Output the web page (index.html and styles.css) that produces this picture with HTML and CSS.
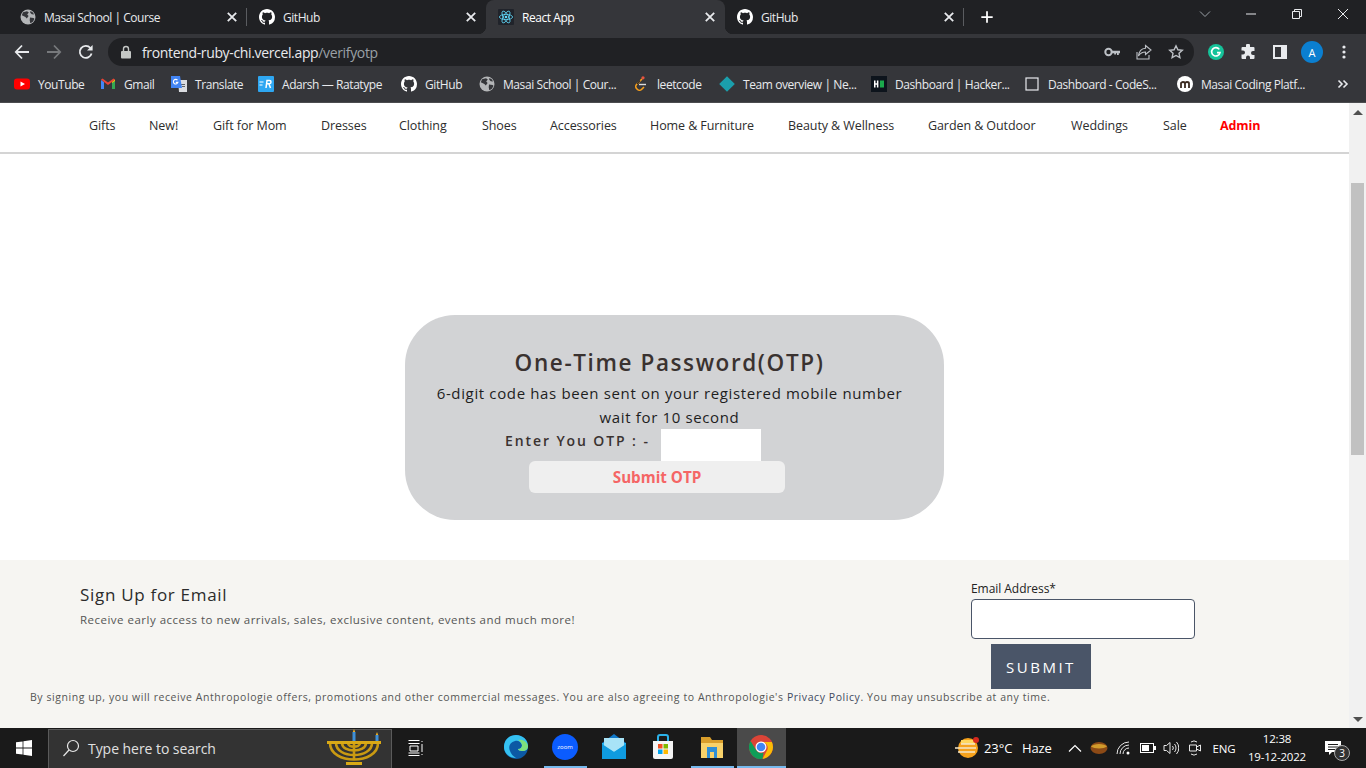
FILE: index.html
```html
<!DOCTYPE html>
<html lang="en">
<head>
<meta charset="utf-8">
<title>React App</title>
<link rel="stylesheet" href="styles.css">
</head>
<body>
<svg class="sprite" aria-hidden="true">
  <symbol id="gh" viewBox="0 0 16 16"><path fill="#fff" d="M8 0C3.58 0 0 3.58 0 8c0 3.54 2.29 6.53 5.47 7.59.4.07.55-.17.55-.38 0-.19-.01-.82-.01-1.49-2.01.37-2.53-.49-2.69-.94-.09-.23-.48-.94-.82-1.13-.28-.15-.68-.52-.01-.53.63-.01 1.08.58 1.23.82.72 1.21 1.87.87 2.33.66.07-.52.28-.87.51-1.07-1.78-.2-3.64-.89-3.64-3.95 0-.87.31-1.59.82-2.15-.08-.2-.36-1.02.08-2.12 0 0 .67-.21 2.2.82.64-.18 1.32-.27 2-.27.68 0 1.36.09 2 .27 1.53-1.04 2.2-.82 2.2-.82.44 1.1.16 1.92.08 2.12.51.56.82 1.27.82 2.15 0 3.07-1.87 3.75-3.65 3.95.29.25.54.73.54 1.48 0 1.07-.01 1.93-.01 2.2 0 .21.15.46.55.38A8.013 8.013 0 0016 8c0-4.42-3.58-8-8-8z"/></symbol>
  <symbol id="globe" viewBox="0 0 16 16"><circle cx="8" cy="8" r="7.5" fill="#b4b6b8"/><path fill="#35363a" d="M3 3.2 7 2.2 8.8 3.6 7.2 5.4 8.6 7 6.8 9.4 5.4 8 3.4 7 1.8 6.2ZM10 8.6l3.6.4.9 1-1.8 3-2.4 1.2-.6-3ZM10.4 2l2.6 1.6 1 2-2.2-.4-1.6-1.4Z"/></symbol>
  <symbol id="close" viewBox="0 0 16 16"><path stroke="#e8eaed" stroke-width="1.8" fill="none" d="M3.8 3.8l8.4 8.4M12.2 3.8l-8.4 8.4"/></symbol>
</svg>

<header class="tabbar">
  <div class="tab sep"><svg class="fav"><use href="#globe"/></svg><span class="tab-title">Masai School | Course</span><svg class="tab-x"><use href="#close"/></svg></div>
  <div class="tab"><svg class="fav"><use href="#gh"/></svg><span class="tab-title">GitHub</span><svg class="tab-x"><use href="#close"/></svg></div>
  <div class="tab tab-active">
    <svg class="fav" viewBox="0 0 16 16"><rect width="16" height="16" rx="1" fill="#20232a"/><g fill="none" stroke="#61dafb" stroke-width=".8"><ellipse cx="8" cy="8" rx="6.6" ry="2.6"/><ellipse cx="8" cy="8" rx="6.6" ry="2.6" transform="rotate(60 8 8)"/><ellipse cx="8" cy="8" rx="6.6" ry="2.6" transform="rotate(120 8 8)"/></g><circle cx="8" cy="8" r="1.3" fill="#61dafb"/></svg>
    <span class="tab-title">React App</span><svg class="tab-x"><use href="#close"/></svg></div>
  <div class="tab sep"><svg class="fav"><use href="#gh"/></svg><span class="tab-title">GitHub</span><svg class="tab-x"><use href="#close"/></svg></div>
  <svg class="plus" viewBox="0 0 16 16"><path stroke="#fff" stroke-width="2" d="M8 1.5v13M1.5 8h13"/></svg>
  <div class="winctl">
    <span class="ctl"><svg width="12" height="12" viewBox="0 0 12 12"><path fill="none" stroke="#9aa0a6" d="M1 3.5l5 5 5-5"/></svg></span>
    <span class="ctl"><svg width="12" height="12" viewBox="0 0 12 12"><path stroke="#e8eaed" d="M1 6h10"/></svg></span>
    <span class="ctl"><svg width="12" height="12" viewBox="0 0 12 12"><path fill="none" stroke="#e8eaed" d="M1.5 3.5h7v7h-7zM3.5 3.5v-2h7v7h-2"/></svg></span>
    <span class="ctl"><svg width="12" height="12" viewBox="0 0 12 12"><path stroke="#e8eaed" d="M1 1l10 10M11 1L1 11"/></svg></span>
  </div>
</header>

<div class="toolbar">
  <span class="tbtn"><svg width="16" height="16" viewBox="0 0 16 16"><path fill="none" stroke="#e8eaed" stroke-width="1.8" d="M15 8H2M8 1.5 1.8 8 8 14.5"/></svg></span>
  <span class="tbtn"><svg width="16" height="16" viewBox="0 0 16 16"><path fill="none" stroke="#77797c" stroke-width="1.8" d="M1 8h13M8 1.5 14.2 8 8 14.5"/></svg></span>
  <span class="tbtn"><svg width="16" height="16" viewBox="0 0 16 16"><path fill="none" stroke="#e8eaed" stroke-width="1.8" d="M13.6 9.5A6 6 0 1 1 12.4 4"/><path fill="#e8eaed" d="M14.6 1v5.6H9z"/></svg></span>
  <div class="omnibox">
    <svg class="lock" width="12" height="14" viewBox="0 0 12 14"><path fill="#c4c7c5" d="M2 6h8a1 1 0 0 1 1 1v5.500a1 1 0 0 1-1 1H2a1 1 0 0 1-1-1V7a1 1 0 0 1 1-1z"/><path fill="none" stroke="#c4c7c5" stroke-width="1.400" d="M3.500 6.500V4a2.500 2.500 0 0 1 5 0v2.500"/></svg>
    <span class="url">frontend-ruby-chi.vercel.app<span class="url-path">/verifyotp</span></span>
    <span class="tbtn"><svg width="16" height="16" viewBox="0 0 16 16"><circle cx="4.500" cy="8" r="3.200" fill="none" stroke="#bdc1c6" stroke-width="2"/><path fill="#bdc1c6" d="M7.500 6.800H16v2.400h-1.200v1.800h-1.800V9.200h-1v1.300h-1.800V9.200H7.500z"/></svg></span>
    <span class="tbtn"><svg width="18" height="18" viewBox="0 0 18 18"><path fill="none" stroke="#bdc1c6" stroke-width="1.100" d="M2 9v7h12v-4M10.500 2.500 16 7l-5.500 4.500V9C7 9 5 10.500 3.500 13c.5-4.500 3-7.500 7-7.800z"/></svg></span>
    <span class="tbtn"><svg width="16" height="16" viewBox="0 0 16 16"><path fill="none" stroke="#bdc1c6" stroke-width="1.400" d="M8 1.800l1.900 4 4.400.5-3.300 3 .9 4.400L8 11.500l-3.900 2.200.9-4.400-3.300-3 4.400-.5z"/></svg></span>
  </div>
  <span class="tbtn tbtn-first"><svg width="16" height="16" viewBox="0 0 16 16"><circle cx="8" cy="8" r="8" fill="#15c39a"/><path fill="none" stroke="#fff" stroke-width="1.600" d="M11.300 5.400A4.200 4.200 0 1 0 12 8.600H9"/></svg></span>
  <span class="tbtn"><svg width="16" height="16" viewBox="0 0 16 16"><path fill="#e8eaed" d="M6 1.500a2 2 0 0 1 4 0V3h3.500a1 1 0 0 1 1 1v3H13a2 2 0 0 0 0 4h1.500v3a1 1 0 0 1-1 1H10v-1.500a2 2 0 0 0-4 0V15H2.500a1 1 0 0 1-1-1v-3.500H3a2 2 0 0 0 0-4H1.500V4a1 1 0 0 1 1-1H6z"/></svg></span>
  <span class="tbtn"><svg width="14" height="14" viewBox="0 0 14 14"><path fill="#e8eaed" fill-rule="evenodd" d="M0 0h14v14H0zM2 2v10h6V2z"/></svg></span>
  <span class="tbtn"><span class="avatar">A</span></span>
  <span class="tbtn"><svg width="4" height="14" viewBox="0 0 4 14"><g fill="#e8eaed"><circle cx="2" cy="2" r="1.600"/><circle cx="2" cy="7" r="1.600"/><circle cx="2" cy="12" r="1.600"/></g></svg></span>
</div>

<nav class="bookmarks">
  <a class="bm bm-yt"><svg class="fav" viewBox="0 0 16 16"><rect y="2.500" width="16" height="11" rx="3" fill="#f00"/><path fill="#fff" d="M6.500 5.500 11 8l-4.500 2.500z"/></svg>YouTube</a>
  <a class="bm bm-gm"><svg class="fav" viewBox="0 0 16 16"><path fill="#4285f4" d="M1 4v9h3V6z"/><path fill="#34a853" d="M12 6v7h3V4z"/><path fill="#ea4335" d="M1 3.500 4 6l4 3 4-3 3-2.500-1.500-1L8 6.500 2.500 2.500z"/><path fill="#fbbc04" d="M12 6l3-2.500V5l-3 2z"/></svg>Gmail</a>
  <a class="bm bm-tr"><svg class="fav" viewBox="0 0 16 16"><path fill="#dadce0" d="M7 4h9v12H8z"/><path fill="#5f6368" d="M10 8h4v1h-4zM11 10h3v1h-3z"/><path fill="#4285f4" d="M0 0h9l2 12H0z"/><path fill="none" stroke="#fff" stroke-width="1.100" d="M6.500 4.200a2.300 2.300 0 1 0 .4 2.200H4.800"/></svg>Translate</a>
  <a class="bm bm-ra"><svg class="fav" viewBox="0 0 16 16"><rect width="16" height="16" rx="1" fill="#2ea7f2"/><path fill="#fff" d="M1.500 5.500h4v1h-4zM1.500 8.500h3v1h-3z"/><path fill="none" stroke="#fff" stroke-width="1.500" d="M8 12 9 4.500h2.500c2 0 2 3.200 0 3.200H9M11 8l1.500 4"/></svg>Adarsh — Ratatype</a>
  <a class="bm bm-gh"><svg class="fav"><use href="#gh"/></svg>GitHub</a>
  <a class="bm bm-ma"><svg class="fav"><use href="#globe"/></svg>Masai School | Cour...</a>
  <a class="bm bm-lc"><svg class="fav" viewBox="0 0 16 16"><circle cx="10" cy="1.800" r="1.600" fill="#e8543f"/><path fill="none" stroke="#f89f1b" stroke-width="1.600" d="M9 3 3.500 8.500c-1 1-1 3 0 4l1 1c1 1 3 1 4 0L11 11"/><path stroke="#dcdcdc" stroke-width="1.400" d="M6 8.500h7"/><path fill="none" stroke="#2c2c2c" stroke-width="1.200" d="M7 4.500 4 8"/></svg>leetcode</a>
  <a class="bm bm-te"><svg class="fav" viewBox="0 0 16 16"><path fill="#1b9fac" d="M8 .2 15.800 8 8 15.800.2 8z"/></svg>Team overview | Ne...</a>
  <a class="bm bm-ha"><svg class="fav" viewBox="0 0 16 16"><rect width="16" height="16" fill="#0d141c"/><path fill="#fff" d="M3 4.500h1.500v2.700h1.400V4.500h1.500v7H5.900V8.700H4.500v2.800H3z"/><rect x="9" y="4.500" width="4" height="7" fill="#1ba94c"/></svg>Dashboard | Hacker...</a>
  <a class="bm bm-cs"><svg class="fav" viewBox="0 0 16 16"><rect x="2" y="2" width="12" height="12" fill="none" stroke="#e8eaed" stroke-width="1.200"/></svg>Dashboard - CodeS...</a>
  <a class="bm bm-mc"><svg class="fav" viewBox="0 0 16 16"><circle cx="8" cy="8" r="8" fill="#fff"/><path fill="none" stroke="#3b2a20" stroke-width="1.800" d="M4 12V6.500M4 7.500c0-2 4-2 4 0V12M8 7.500c0-2 4-2 4 0V12"/></svg>Masai Coding Platf...</a>
  <svg class="more" width="12" height="10" viewBox="0 0 12 10"><path fill="none" stroke="#e8eaed" stroke-width="1.600" d="M1.500 1.500 5 5 1.500 8.500M6.500 1.500 10 5 6.500 8.500"/></svg>
</nav>

<div class="viewport">
  <div class="page">
    <div class="sitenav">
      <a>Gifts</a><a>New!</a><a>Gift for Mom</a><a>Dresses</a><a>Clothing</a><a>Shoes</a><a>Accessories</a><a>Home &amp; Furniture</a><a>Beauty &amp; Wellness</a><a>Garden &amp; Outdoor</a><a>Weddings</a><a>Sale</a><a class="admin">Admin</a>
    </div>
    <main class="content">
      <section class="card">
        <h1 class="card-title">One-Time Password(OTP)</h1>
        <p class="card-text">6-digit code has been sent on your registered mobile number</p>
        <p class="card-text">wait for 10 second</p>
        <div class="otp-row">
          <label class="otp-label" for="otp">Enter You OTP : -</label>
          <input class="otp-input" id="otp" type="text">
        </div>
        <button class="otp-submit" type="button">Submit OTP</button>
      </section>
    </main>
    <footer class="signup">
      <div class="signup-top">
        <div class="signup-intro">
          <h2 class="signup-title">Sign Up for Email</h2>
          <p class="signup-sub">Receive early access to new arrivals, sales, exclusive content, events and much more!</p>
        </div>
        <form class="signup-form">
          <label class="email-label" for="email">Email Address*</label>
          <input class="email-input" id="email" type="text">
          <button class="email-submit" type="button">SUBMIT</button>
        </form>
      </div>
      <p class="legal">By signing up, you will receive Anthropologie offers, promotions and other commercial messages. You are also agreeing to Anthropologie's <span class="legal-link">Privacy Policy</span>. You may unsubscribe at any time.</p>
    </footer>
  </div>
  <div class="scrollbar">
    <span class="arrow-up"></span>
    <span class="thumb"></span>
    <span class="arrow-down"></span>
  </div>
</div>

<div class="taskbar">
  <span class="start"><svg width="16" height="16" viewBox="0 0 16 16"><path fill="#fff" d="M0 2.300 6.600 1.400V7.600H0zM7.400 1.300 16 0V7.600H7.400zM0 8.400H6.600V14.600L0 13.700zM7.400 8.400H16V16L7.400 14.700z"/></svg></span>
  <div class="search">
    <svg width="18" height="18" viewBox="0 0 18 18"><circle cx="11" cy="7" r="5.500" fill="none" stroke="#e8e8e8" stroke-width="1.200"/><path stroke="#e8e8e8" stroke-width="1.200" d="M7 11 1.500 17"/></svg>
    <span class="search-text">Type here to search</span>
    <svg class="menorah" width="58" height="38" viewBox="0 0 58 38"><g fill="none" stroke="#c99a12" stroke-width="2.600"><path d="M29 14v17M5 14c0 22 48 22 48 0M11 14c0 16 36 16 36 0M17 14c0 10 24 10 24 0M23 14c0 5 12 5 12 0"/></g><path fill="#d9a916" d="M2 12h54v3H2zM21 33h16v3H21z"/><rect x="27.500" y="3" width="3" height="9" fill="#3f8fd6"/><rect x="50.500" y="6" width="3" height="6" fill="#3f8fd6"/><path fill="#f4b120" d="M29 0l1.200 3h-2.400zM52 3l1.200 3h-2.400z"/></svg>
  </div>
  <span class="taskview"><svg width="16" height="16" viewBox="0 0 16 16"><path fill="none" stroke="#fff" d="M.5 3.500h11M.5.500h11M2 6h8v5H2zM.5 15.500h11M.5 13h11M14 1v1M14 4v8M14 14v1"/></svg></span>
  <div class="apps">
    <span class="app"><svg width="26" height="26" viewBox="0 0 26 26"><circle cx="13" cy="13" r="12" fill="#0c59a4"/><path fill="#35c1f1" d="M1 13C1 5 7 1 13 1c7 0 12 5 12 11 0 3-2 5-6 5-2 0-4-1-4-2 3 0 4-2 4-4-1-3-4-5-7-4-5 1-7 6-5 10 1 3 3 5 6 7C6 24 1 19 1 13z"/><path fill="#7ee07c" d="M25 12c0 3-2 5-6 5-2 0-4-1-4-2 3 0 4-2 4-4-1-3-2-4-4-5 5-1 9 2 10 6z"/></svg></span>
    <span class="app app-open"><svg width="26" height="26" viewBox="0 0 26 26"><circle cx="13" cy="13" r="13" fill="#0b5cff"/><text class="zoom-word" x="13" y="15" text-anchor="middle">zoom</text></svg></span>
    <span class="app"><svg width="26" height="26" viewBox="0 0 26 26"><path fill="#0f78c9" d="M1 9 13 0l12 9v2H1z"/><path fill="#29b6f1" d="M1 9h24v16H1z"/><path fill="#a8e3f7" d="M3 4h20v8l-10 6-10-6z"/><path fill="#0f9be0" d="M1 10l12 8 12-8v15H1z"/></svg></span>
    <span class="app app-store"><svg width="26" height="26" viewBox="0 0 26 26"><path fill="none" stroke="#2bb1e8" stroke-width="2" d="M8 8V3a2 2 0 0 1 2-2h6a2 2 0 0 1 2 2v5"/><path fill="#f5f5f5" d="M3 7h20v16a2 2 0 0 1-2 2H5a2 2 0 0 1-2-2z"/><rect x="8" y="10" width="4.500" height="4.500" fill="#f25022"/><rect x="13.500" y="10" width="4.500" height="4.500" fill="#7fba00"/><rect x="8" y="15.500" width="4.500" height="4.500" fill="#00a4ef"/><rect x="13.500" y="15.500" width="4.500" height="4.500" fill="#ffb900"/></svg></span>
    <span class="app app-open"><svg width="26" height="26" viewBox="0 0 26 26"><path fill="#d99e2b" d="M2 3h9l2 3h11v3H2z"/><path fill="#f8d26a" d="M2 9h22v15H2z"/><rect x="8" y="13" width="10" height="11" fill="#2f8fd6"/><rect x="11" y="18" width="4" height="6" fill="#f8d26a"/></svg></span>
    <span class="app app-open app-active"><svg width="24" height="24" viewBox="0 0 24 24"><circle cx="12" cy="12" r="12" fill="#db4437"/><path fill="#fbbc05" d="M12 7h10.900a12 12 0 0 1-9.400 16.900l5-9.400A6 6 0 0 0 12 7z"/><path fill="#0f9d58" d="M1.600 6 7 15a6 6 0 0 0 7.500 2.500L13.500 23.900A12 12 0 0 1 1.600 6z"/><circle cx="12" cy="12" r="5.500" fill="#fff"/><circle cx="12" cy="12" r="4.300" fill="#4285f4"/></svg></span>
  </div>
  <div class="tray">
    <span class="tray-cell"><svg width="26" height="24" viewBox="0 0 26 24"><circle cx="14" cy="12" r="10" fill="#f6a21c"/><path fill="#ffd75e" d="M7 4h14v4H7z"/><path stroke="#f4e6c8" stroke-width="1.500" d="M1 12h21M4 16h17M7 8h14"/><circle cx="22" cy="4" r="3" fill="#d6291e"/></svg></span>
    <span class="tray-text">23°C</span>
    <span class="tray-text">Haze</span>
    <span class="tray-cell"><svg width="14" height="8" viewBox="0 0 14 8"><path fill="none" stroke="#fff" stroke-width="1.200" d="M1 7.500 7 1.500l6 6"/></svg></span>
    <span class="tray-cell"><svg width="18" height="12" viewBox="0 0 18 12"><ellipse cx="9" cy="6" rx="8.500" ry="6" fill="#8c4a16"/><path fill="#d19b2c" d="M1 4.500C3 1 15 1 17 4.500 14 7 4 7 1 4.500z"/></svg></span>
    <span class="tray-cell"><svg width="16" height="14" viewBox="0 0 16 14"><g fill="none" stroke="#e8e8e8"><path d="M1 13A12 12 0 0 1 13 1M4 13a9 9 0 0 1 9-9M7 13a6 6 0 0 1 6-6"/></g><circle cx="12" cy="12" r="1.500" fill="#fff"/></svg></span>
    <span class="tray-cell"><svg width="16" height="10" viewBox="0 0 16 10"><rect x=".5" y=".5" width="13" height="9" fill="none" stroke="#fff"/><rect x="2" y="2" width="7" height="6" fill="#fff"/><rect x="14" y="3" width="2" height="4" fill="#fff"/></svg></span>
    <span class="tray-cell"><svg width="16" height="14" viewBox="0 0 16 14"><path fill="none" stroke="#e8e8e8" d="M1 4.500h2.500L7 1.500v11L3.500 9.500H1zM9.500 5a3 3 0 0 1 0 4M11.500 3a6 6 0 0 1 0 8M13.500 1a9 9 0 0 1 0 12"/></svg></span>
    <span class="tray-cell"><svg width="14" height="18" viewBox="0 0 14 18"><path fill="none" stroke="#e8e8e8" d="M1.500 6h7v6h-7zM8.500 8 12.500 6v6l-4-2M3 3a5 5 0 0 1 6 0M3 15a5 5 0 0 0 6 0"/></svg></span>
    <span class="tray-text tray-center">ENG</span>
    <span class="clock"><span>12:38</span><span>19-12-2022</span></span>
    <span class="notif">
      <svg width="16" height="15" viewBox="0 0 16 15"><path fill="#fff" d="M0 0h16v11H7l-3 3v-3H0z"/><path stroke="#1b1b1b" d="M3 3.500h10M3 6h10M3 8.500h7"/></svg>
      <span class="notif-badge">3</span>
    </span>
  </div>
</div>
</body>
</html>
```

FILE: styles.css
```css
* { box-sizing: border-box; }
html, body { margin: 0; height: 100%; overflow: hidden; }
body {
  width: 1366px;
  height: 768px;
  display: flex;
  flex-direction: column;
  font-family: "Open Sans", "Noto Sans", sans-serif;
  color: #222;
}
.sprite { position: absolute; width: 0; height: 0; }
.fav { width: 16px; height: 16px; flex: none; }

/* Tab strip */
.tabbar { height: 34px; background: #202124; display: flex; padding-left: 8px; flex: none; }
.tab { width: 239px; height: 34px; display: flex; align-items: center; padding: 0 7px 0 12px; position: relative; color: #e8eaed; font-size: 12px; letter-spacing: -.45px; }
.sep::after { content: ""; position: absolute; right: 0; top: 8px; height: 18px; width: 1px; background: #5a5c60; }
.tab-title { flex: 1; margin-left: 8px; white-space: nowrap; }
.tab-x { width: 16px; height: 16px; flex: none; }
.tab-active { background: #35363a; border-radius: 8px 8px 0 0; color: #fff; }
.tab-active::before, .tab-active::after { content: ""; position: absolute; bottom: 0; width: 8px; height: 8px; }
.tab-active::before { left: -8px; background: radial-gradient(circle at 0 0, transparent 8px, #35363a 8.500px); }
.tab-active::after { right: -8px; background: radial-gradient(circle at 100% 0, transparent 8px, #35363a 8.500px); }
.plus { width: 14px; height: 14px; margin: 10px 0 0 16px; flex: none; }
.winctl { margin-left: auto; display: flex; }
.ctl { width: 46px; height: 28px; display: flex; align-items: center; justify-content: center; }

/* Toolbar */
.toolbar { height: 34px; background: #35363a; display: flex; align-items: center; padding: 2px 0 0 6px; flex: none; }
.tbtn { width: 32px; height: 28px; display: flex; align-items: center; justify-content: center; flex: none; }
.tbtn-first { margin-left: 6px; }
.omnibox { width: 1086px; height: 28px; margin-left: 6px; background: #202124; border-radius: 14px; display: flex; align-items: center; padding: 0 2px 0 12px; }
.lock { flex: none; }
.url { flex: 1; margin-left: 10px; font-size: 14px; letter-spacing: -.35px; color: #e8eaed; white-space: nowrap; }
.url-path { color: #9aa0a6; }
.avatar { width: 22px; height: 22px; border-radius: 50%; background: #0b7fd0; color: #fff; font-size: 11px; display: flex; align-items: center; justify-content: center; }

/* Bookmarks */
.bookmarks { height: 35px; background: #35363a; border-bottom: 1px solid #4b4c4f; display: flex; align-items: center; padding: 0 0 2px 14px; flex: none; font-size: 12px; letter-spacing: -.42px; color: #e8eaed; }
.bm { display: flex; align-items: center; gap: 8px; white-space: nowrap; flex: none; }
.bm-yt { width: 86px; }
.bm-gm { width: 71px; }
.bm-tr { width: 87px; }
.bm-ra { width: 143px; }
.bm-gh { width: 78px; }
.bm-ma { width: 154px; }
.bm-lc { width: 86px; }
.bm-te { width: 152px; }
.bm-ha { width: 153px; }
.bm-cs { width: 153px; }
.bm-mc { width: 160px; }
.more { flex: none; }

/* Viewport */
.viewport { flex: 1; display: flex; min-height: 0; }
.page { flex: 1; display: flex; flex-direction: column; background: #fff; min-width: 0; }
.scrollbar { width: 17px; background: #f1f1f1; display: flex; flex-direction: column; align-items: center; flex: none; }
.arrow-up { margin-top: 7px; border: 5px solid transparent; border-top: 0; border-bottom: 5px solid #505050; }
.thumb { width: 13px; height: 272px; background: #c1c1c1; margin-top: 68px; }
.arrow-down { margin-top: auto; margin-bottom: 6px; border: 5px solid transparent; border-bottom: 0; border-top: 5px solid #505050; }

/* Site nav */
.sitenav { height: 51px; flex: none; border-bottom: 2px solid #d4d4d4; padding: 0 0 4px 89px; display: grid; grid-template-columns: 60px 64px 108px 78px 83px 68px 100px 138px 140px 143px 92px 57px 60px; align-items: center; font-size: 12.500px; letter-spacing: -.08px; color: #2d2d2d; white-space: nowrap; }
.admin { color: #f00; font-weight: 700; }

/* OTP card */
.content { flex: 1; display: flex; justify-content: center; align-items: flex-start; padding-top: 161px; }
.card { width: 539px; height: 205px; background: #d2d3d5; border-radius: 50px; padding-top: 29px; }
.card-title { margin: 0 10px 0 0; height: 37px; line-height: 37px; font-size: 22.500px; font-weight: 600; letter-spacing: 1.600px; text-align: center; color: #3a3230; }
.card-text { margin: 0 10px 0 0; height: 24px; line-height: 24px; font-size: 15px; letter-spacing: .64px; text-align: center; color: #1e1e1e; }
.otp-row { display: flex; align-items: flex-start; padding-left: 100px; height: 32px; }
.otp-label { width: 156px; font-size: 14px; line-height: 24px; font-weight: 600; letter-spacing: 1.900px; color: #3a3230; white-space: nowrap; }
.otp-input { width: 100px; height: 32px; border: 0; background: #fff; padding: 0; }
.otp-submit { display: block; width: 256px; height: 32px; margin-left: 124px; border: 0; border-radius: 6px; background: #efefef; color: #f56565; font: 700 15.200px "Open Sans", sans-serif; }

/* Footer */
.signup { height: 168px; flex: none; background: #f6f5f2; padding: 21px 0 0 30px; }
.signup-top { display: flex; height: 109px; }
.signup-intro { width: 941px; padding: 2px 0 0 50px; }
.signup-title { margin: 0; font-size: 17px; line-height: 23px; font-weight: 400; letter-spacing: .7px; color: #2b2b2b; }
.signup-sub { margin: 6px 0 0; font-size: 11.500px; line-height: 16px; letter-spacing: .49px; color: #555; white-space: nowrap; }
.signup-form { display: flex; flex-direction: column; align-items: flex-start; margin-top: -1px; }
.email-label { font-size: 12px; line-height: 18px; letter-spacing: -.05px; color: #222; }
.email-input { width: 224px; height: 40px; border: 1px solid #4a5568; border-radius: 4px; background: #fff; margin-top: 1px; }
.email-submit { width: 100px; height: 45px; margin: 5px 0 0 20px; border: 0; background: #4a5568; color: #fff; font: 400 15px "Open Sans", sans-serif; letter-spacing: 2.500px; }
.legal { margin: 0; font-size: 10.500px; line-height: 14px; letter-spacing: .57px; color: #555; white-space: nowrap; }
.legal-link { color: #3f4a5f; }

/* Taskbar */
.taskbar { height: 40px; background: #1a1a1a; display: flex; flex: none; color: #fff; }
.start { width: 48px; display: flex; align-items: center; justify-content: center; }
.search { width: 344px; margin-top: 1px; padding: 0 0 2px 13px; background: #333; border: 1px solid #5a5a5a; border-bottom: 0; display: flex; align-items: center; font-size: 14px; color: #e0e0e0; position: relative; }
.search-text { margin-left: 8px; letter-spacing: -.05px; }
.menorah { margin-left: auto; margin-right: 8px; }
.taskview { width: 48px; display: flex; align-items: center; justify-content: center; }
.apps { display: flex; margin-left: 52px; }
.app { width: 49px; padding-right: 1px; display: flex; align-items: center; justify-content: center; border-bottom: 2px solid transparent; }
.app-open { border-image: linear-gradient(90deg, transparent 4px, #76b9ed 4px, #76b9ed 45px, transparent 45px) 1; }
.app-active { background: #4a4a4a; border-image: none; border-bottom-color: #76b9ed; }
.zoom-word { font-size: 6px; fill: #fff; font-family: "Open Sans", sans-serif; }
.tray { margin-left: auto; display: grid; grid-template-columns: 34px 38px 41px 24px 24px 25px 23px 24px 24px 34px 72px 40px; margin-right: 13px; align-items: center; font-size: 13px; }
.tray-cell { display: flex; justify-content: center; align-items: center; }
.tray-text { white-space: nowrap; letter-spacing: -.1px; }
.tray-center { text-align: center; font-size: 11.500px; }
.clock { display: flex; flex-direction: column; align-items: center; font-size: 11.500px; line-height: 18px; letter-spacing: -.2px; }
.notif { position: relative; display: flex; justify-content: center; align-items: center; height: 40px; }
.notif-badge { position: absolute; left: 21px; top: 17px; width: 16px; height: 16px; border-radius: 50%; background: #333; border: 1px solid #aaa; font-size: 10px; line-height: 14px; text-align: center; }
```
